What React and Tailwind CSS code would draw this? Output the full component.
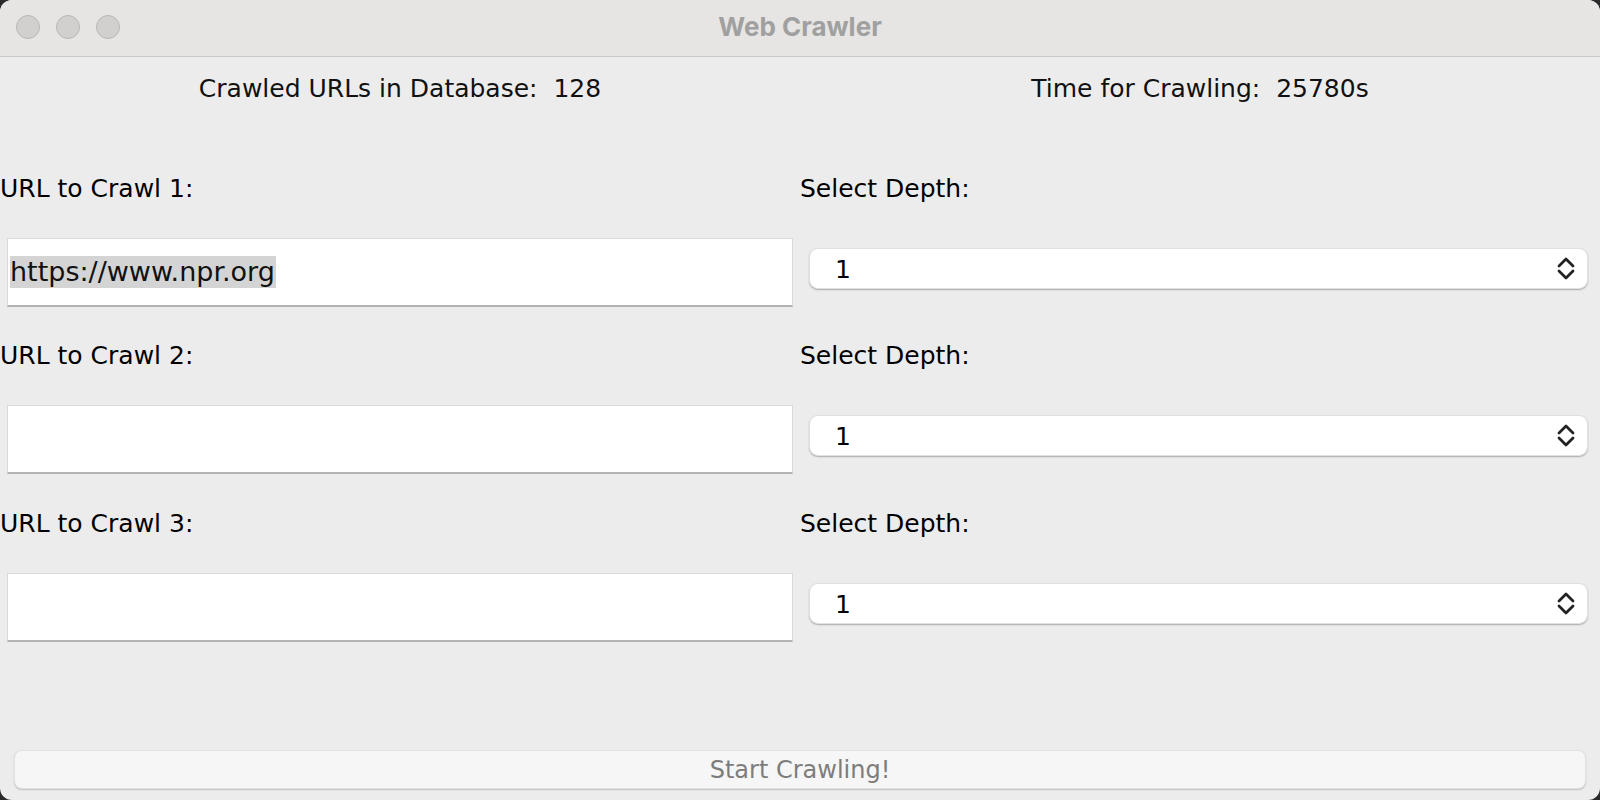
import React from 'react';

const rows = [
  { label: 'URL to Crawl 1:', value: 'https://www.npr.org', h: 'h-[167px]' },
  { label: 'URL to Crawl 2:', value: '', h: 'h-[168px]' },
  { label: 'URL to Crawl 3:', value: '', h: 'h-[167px]' },
];

const UpDown = () => (
  <svg width="18" height="23" viewBox="0 0 18 23" fill="none" stroke="#222" strokeWidth="2.8" strokeLinecap="round" strokeLinejoin="round">
    <polyline points="2,9 9,2 16,9" />
    <polyline points="2,14 9,21 16,14" />
  </svg>
);

const TrafficLight = () => (
  <span className="w-[24px] h-[24px] rounded-full bg-[#d1d0ce] border border-[#b8b7b5]" />
);

const CrawlRow = ({ label, value, h }) => (
  <div className={`grid grid-cols-2 ${h}`}>
    <div className="flex flex-col">
      <div className="h-[68px] flex items-center text-[25px] text-black">{label}</div>
      <div className="mt-[15px] mx-[7px] h-[69px] bg-white border border-[#dadada] border-b-[#b3b3b3] border-b-2 flex items-center pl-[2px]">
        {value && (
          <span className="bg-[#d4d4d4] text-[27px] leading-[32px] text-[#111] pr-[1px]">{value}</span>
        )}
      </div>
    </div>
    <div className="flex flex-col">
      <div className="h-[68px] flex items-center text-[25px] text-black">Select Depth:</div>
      <div className="mt-[25px] ml-[9px] mr-[12px] h-[41px] bg-white rounded-[9px] border border-[#e0e0e0] shadow-[0_1px_1.5px_rgba(0,0,0,0.28)] flex items-center justify-between pl-[25px] pr-[12px]">
        <span className="text-[25px] text-black pt-[3px]">1</span>
        <UpDown />
      </div>
    </div>
  </div>
);

export default function App() {
  return (
    <div className="w-[1600px] h-[800px] bg-[#2a2a2a] font-['DejaVu_Sans',sans-serif]">
      <div className="w-full h-full rounded-[12px] overflow-hidden bg-[#ececec] flex flex-col">
        <div className="h-[57px] shrink-0 bg-[#e6e5e4] border-b border-[#c9c9c9] relative flex items-center justify-center">
          <div className="absolute left-[16px] top-[15px] flex gap-[16px]">
            <TrafficLight />
            <TrafficLight />
            <TrafficLight />
          </div>
          <span className="font-['Inter',sans-serif] font-bold text-[26px] text-[#a0a0a0] -mt-[4px]">Web Crawler</span>
        </div>

        <div className="grid grid-cols-2 h-[98px] pt-[15px] text-[25px] leading-[34px] text-[#111]">
          <div className="text-center whitespace-pre">Crawled URLs in Database:  128</div>
          <div className="text-center whitespace-pre">Time for Crawling:  25780s</div>
        </div>

        {rows.map((r) => (
          <CrawlRow key={r.label} {...r} />
        ))}

        <div className="flex-1" />

        <button className="mx-[14px] mb-[11px] h-[39px] rounded-[8px] bg-[#f6f6f6] border border-[#e2e2e2] shadow-[0_1px_1.5px_rgba(0,0,0,0.2)] text-[24px] text-[#7d7d7d] font-['DejaVu_Sans',sans-serif]">
          Start Crawling!
        </button>
      </div>
    </div>
  );
}
